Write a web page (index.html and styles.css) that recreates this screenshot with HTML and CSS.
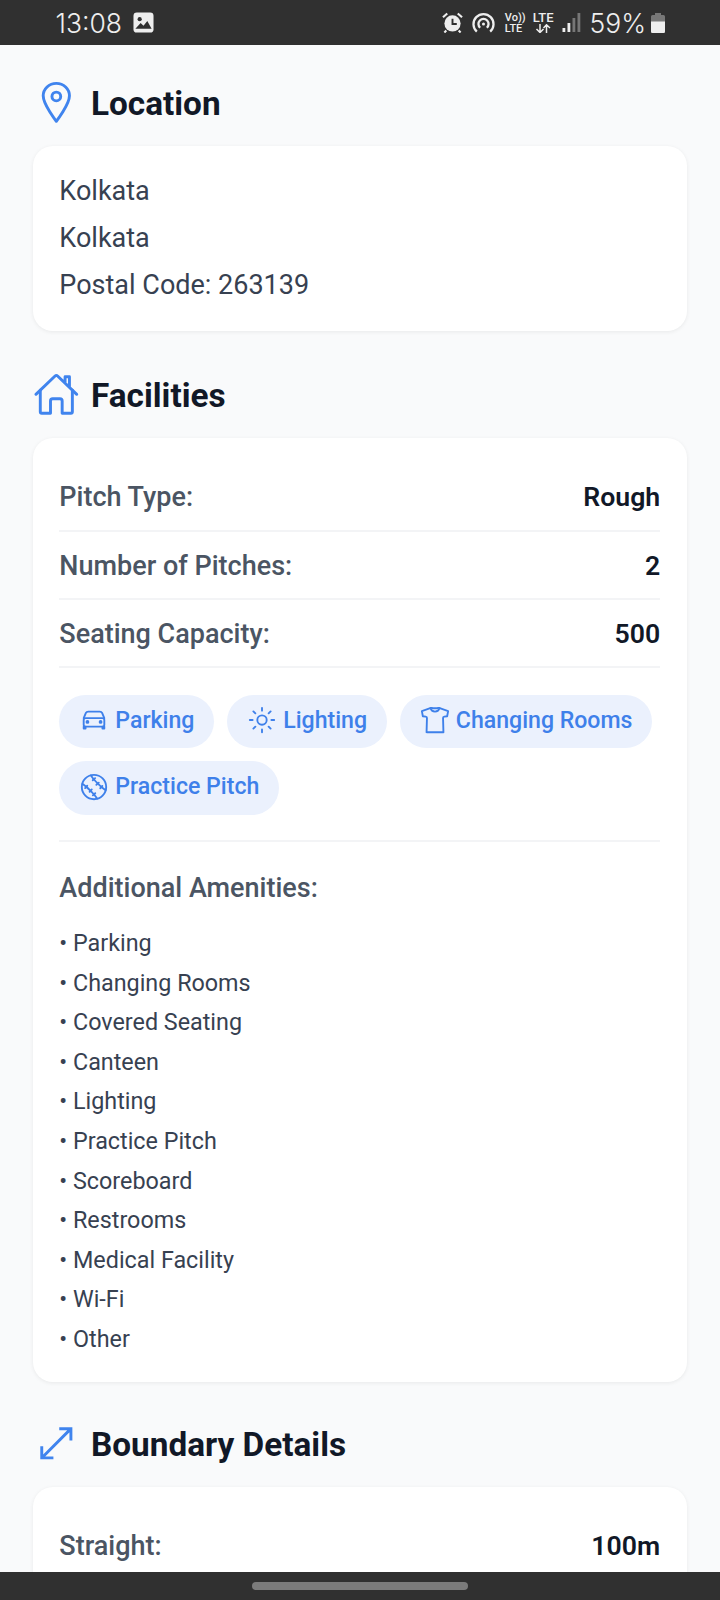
FILE: index.html
```html
<!DOCTYPE html>
<html lang="en">
<head>
<meta charset="utf-8">
<title>Ground details</title>
<link rel="stylesheet" href="styles.css">
</head>
<body>
<div class="screen">
  <header class="status">
    <div class="status-left">
      <span class="clock">13:08</span>
      <svg class="st-img" viewBox="0 0 22 22"><rect x="0.5" y="0.5" width="21" height="21" rx="3.5" fill="#eee"/><circle cx="7" cy="7.5" r="2.2" fill="#303030"/><path d="M2.500 17.500l5.500-6 3 3 4-5 4.500 8z" fill="#303030"/></svg>
    </div>
    <div class="status-right">
      <svg class="st-alarm" viewBox="0 0 22 22"><circle cx="11" cy="12" r="8.500" fill="#eee"/><path d="M1 5.500l4.500-4M21 5.500l-4.500-4M4.500 19.500l-2 2M17.500 19.500l2 2" stroke="#eee" stroke-width="2.200" fill="none"/><path d="M11 7v5.500h4.500" stroke="#303030" stroke-width="2" fill="none"/></svg>
      <svg class="st-hot" viewBox="0 0 24 22" fill="none" stroke="#eee" stroke-width="2.400"><path d="M5 20.500a10.500 10.500 0 1 1 14 0"/><path d="M8.500 16.500a5.300 5.300 0 1 1 7 0"/><circle cx="12" cy="12.500" r="1.600" fill="#eee" stroke="none"/></svg>
      <div class="st-volte"><span>Vo))</span><span>LTE</span></div>
      <div class="st-lte"><span>LTE</span><svg viewBox="0 0 16 9" fill="none" stroke="#eee" stroke-width="1.500"><path d="M5 0v8M1.500 5L5 8.500 8.500 5M11.500 9V1M8.500 4L11.500 .8 15 4"/></svg></div>
      <svg class="st-signal" viewBox="0 0 18 20"><rect x="0" y="15" width="2.800" height="4" fill="#eee"/><rect x="5" y="10" width="2.800" height="9" fill="#eee"/><rect x="10" y="5" width="2.800" height="14" fill="#777"/><rect x="15" y="0" width="2.800" height="19" fill="#777"/></svg>
      <span class="battery-text">59%</span>
      <svg class="st-batt" viewBox="0 0 14 20"><path d="M4 0h6v2h2.500a1.500 1.500 0 0 1 1.500 1.500V18.500a1.500 1.500 0 0 1-1.500 1.500h-11A1.500 1.500 0 0 1 0 18.500V3.500A1.500 1.500 0 0 1 1.500 2H4z" fill="#777"/><path d="M0 8.500h14v10a1.500 1.500 0 0 1-1.500 1.500h-11A1.500 1.500 0 0 1 0 18.500z" fill="#eee"/></svg>
    </div>
  </header>

  <main class="content">
    <section class="section">
      <h2 class="sec-title">
        <svg class="sec-icon" viewBox="0 0 512 512" fill="none" stroke="currentColor" stroke-width="32" stroke-linecap="round" stroke-linejoin="round"><path d="M256 48c-79.500 0-144 61.390-144 137 0 96 144 279 144 279s144-183 144-279c0-75.610-64.500-137-144-137z"/><circle cx="256" cy="192" r="48"/></svg>
        <span class="sec-name">Location</span>
      </h2>
      <div class="card loc-card">
        <p class="loc-line">Kolkata</p>
        <p class="loc-line">Kolkata</p>
        <p class="loc-line">Postal Code: 263139</p>
      </div>
    </section>

    <section class="section section-tight">
      <h2 class="sec-title">
        <svg class="sec-icon" viewBox="0 0 512 512" fill="none" stroke="currentColor" stroke-width="32" stroke-linecap="round" stroke-linejoin="round"><path d="M80 212v236a16 16 0 0 0 16 16h96V328a24 24 0 0 1 24-24h80a24 24 0 0 1 24 24v136h96a16 16 0 0 0 16-16V212"/><path d="M480 256L266.890 52c-5-5.280-16.690-5.340-21.780 0L32 256M400 179V64h-48v69"/></svg>
        <span class="sec-name">Facilities</span>
      </h2>
      <div class="card fac-card">
        <div class="row"><span class="row-label">Pitch Type:</span><span class="row-value">Rough</span></div>
        <div class="row"><span class="row-label">Number of Pitches:</span><span class="row-value">2</span></div>
        <div class="row"><span class="row-label">Seating Capacity:</span><span class="row-value">500</span></div>
        <div class="chips">
          <span class="chip">
            <svg class="chip-icon" viewBox="0 0 512 512" fill="none" stroke="currentColor" stroke-width="32" stroke-linecap="round" stroke-linejoin="round"><path d="M80 224l37.780-88.150C123.930 121.500 139.600 112 157.110 112h197.780c17.510 0 33.180 9.500 39.330 23.850L432 224"/><rect x="80" y="224" width="352" height="144" rx="32" ry="32"/><path d="M112 368v32H80v-32M432 368v32h-32v-32"/><circle cx="144" cy="288" r="16"/><circle cx="368" cy="288" r="16"/></svg>
            Parking
          </span>
          <span class="chip">
            <svg class="chip-icon" viewBox="0 0 512 512" fill="none" stroke="currentColor" stroke-width="32" stroke-linecap="round"><path d="M256 48v48M256 416v48M403.080 108.920l-33.940 33.940M142.860 369.140l-33.940 33.940M464 256h-48M96 256H48M403.080 403.080l-33.940-33.940M142.860 142.860l-33.940-33.940"/><circle cx="256" cy="256" r="80"/></svg>
            Lighting
          </span>
          <span class="chip">
            <svg class="chip-icon" viewBox="0 0 512 512" fill="none" stroke="currentColor" stroke-width="32" stroke-linecap="round" stroke-linejoin="round"><path d="M314.560 48S291.780 56 256 56s-58.560-8-58.560-8a31.940 31.940 0 0 0-10.570 1.800L32 104l16.630 88 48.880 5.520a24 24 0 0 1 21.290 24.580L112 464h288l-6.800-241.900a24 24 0 0 1 21.290-24.580l48.880-5.520L480 104 325.130 49.800a31.940 31.940 0 0 0-10.570-1.800z"/><path d="M333.310 52.660a80 80 0 0 1-154.620 0"/></svg>
            Changing Rooms
          </span>
          <span class="chip">
            <svg class="chip-icon" viewBox="0 0 24 24" fill="none" stroke="currentColor" stroke-width="1.500" stroke-linecap="round"><circle cx="12" cy="12" r="9.750"/><path d="M9.500 2.700C11.500 6 18 12.500 21.300 14.500M2.700 9.500C6 11.500 12.500 18 14.500 21.300"/><path d="M11 6.600l1.900-1.700M13.900 10.200l1.900-1.700M17 13l1.700-1.900M6.600 11l-1.700 1.900M10.200 13.900l-1.700 1.900M13 17l-1.900 1.700"/></svg>
            Practice Pitch
          </span>
        </div>
        <div class="amenities">
          <h3 class="am-title">Additional Amenities:</h3>
          <ul class="am-list">
            <li>• Parking</li>
            <li>• Changing Rooms</li>
            <li>• Covered Seating</li>
            <li>• Canteen</li>
            <li>• Lighting</li>
            <li>• Practice Pitch</li>
            <li>• Scoreboard</li>
            <li>• Restrooms</li>
            <li>• Medical Facility</li>
            <li>• Wi-Fi</li>
            <li>• Other</li>
          </ul>
        </div>
      </div>
    </section>

    <section class="section">
      <h2 class="sec-title">
        <svg class="sec-icon" viewBox="0 0 512 512" fill="none" stroke="currentColor" stroke-width="32" stroke-linecap="square" stroke-linejoin="miter"><path d="M304 96h112v112M405.770 106.200L111.980 400.020M208 416H96V304"/></svg>
        <span class="sec-name">Boundary Details</span>
      </h2>
      <div class="card fac-card">
        <div class="row"><span class="row-label">Straight:</span><span class="row-value">100m</span></div>
      </div>
    </section>
  </main>

  <footer class="navbar"><span class="home-pill"></span></footer>
</div>
</body>
</html>
```
FILE: styles.css
```css
* { box-sizing: border-box; }
html, body { margin: 0; padding: 0; }
body { font-family: Roboto, "Liberation Sans", sans-serif; background: #f9fafb; }
.screen { width: 720px; height: 1600px; display: flex; flex-direction: column; overflow: hidden; }

.status { flex: 0 0 45px; background: #303030; color: #eee; display: flex; justify-content: space-between; align-items: center; padding: 0 55px 0 55.500px; }
.status-left, .status-right { display: flex; align-items: center; }
.clock { font-family: Inter, Roboto, sans-serif; font-size: 26.500px; font-weight: 300; }
.st-img { width: 21px; height: 21px; margin-left: 11px; }
.st-alarm { width: 21px; height: 21px; }
.st-hot { width: 23px; height: 21px; margin-left: 9px; }
.st-volte { display: flex; flex-direction: column; font-size: 11px; font-weight: 500; line-height: 11px; margin-left: 10px; width: 21px; }
.st-lte { display: flex; flex-direction: column; align-items: center; font-size: 13px; font-weight: 500; line-height: 12px; margin-left: 7px; }
.st-lte svg { width: 16px; height: 9px; }
.st-signal { width: 19px; height: 20px; margin-left: 8px; }
.battery-text { font-family: Inter, Roboto, sans-serif; font-size: 26.500px; font-weight: 300; margin-left: 9px; }
.st-batt { width: 14px; height: 20px; margin-left: 5px; }

.content { flex: 1 1 auto; min-height: 0; overflow: hidden; padding: 33.830px 33.330px 0; }
.section { margin-bottom: 40.300px; }
.section-tight { margin-bottom: 38px; }
.sec-title { display: flex; align-items: center; gap: 11px; margin: 0 0 20.500px; font-size: 33.330px; font-weight: 700; color: #111827; }
.sec-icon { width: 46.670px; height: 46.670px; color: #4084ee; flex: none; }
.sec-name { line-height: 42px; padding-top: 4px; }

.card { background: #fff; border-radius: 20px; box-shadow: 0 1px 4px rgba(0,0,0,.07); }
.loc-card { padding: 22.400px 26px; }
.loc-line { margin: 0; font-size: 27px; line-height: 46.670px; color: #374151; }
.fac-card { padding: 25px 26.500px 22.500px 26px; }

.row { display: flex; justify-content: space-between; align-items: center; padding: 14.170px 0 12.170px; border-bottom: 2px solid #f3f4f6; line-height: 40px; }
.row-label { color: #4b5563; font-size: 27px; font-weight: 500; }
.row-value { color: #111827; font-size: 26.670px; font-weight: 600; }

.chips { display: flex; flex-wrap: wrap; gap: 13.330px 12.800px; padding: 26.500px 0 25px; border-bottom: 2px solid #f3f4f6; }
.chip { display: inline-flex; align-items: center; gap: 6px; height: 53.330px; padding: 0 20px 2px; border-radius: 27px; background: #ebf1fd; color: #3e80ea; font-size: 23.100px; font-weight: 500; }
.chip-icon { width: 30px; height: 30px; flex: none; }

.amenities { padding-top: 26.670px; }
.am-title { margin: 0 0 15.700px; font-size: 27px; line-height: 40px; font-weight: 500; color: #4b5563; }
.am-list { list-style: none; margin: 0; padding: 0; }
.am-list li { font-size: 23.330px; line-height: 39.600px; color: #374151; }

.navbar { flex: 0 0 28px; background: #303030; display: flex; align-items: center; justify-content: center; }
.home-pill { width: 216px; height: 8px; border-radius: 4px; background: #7b7b7b; }
```
